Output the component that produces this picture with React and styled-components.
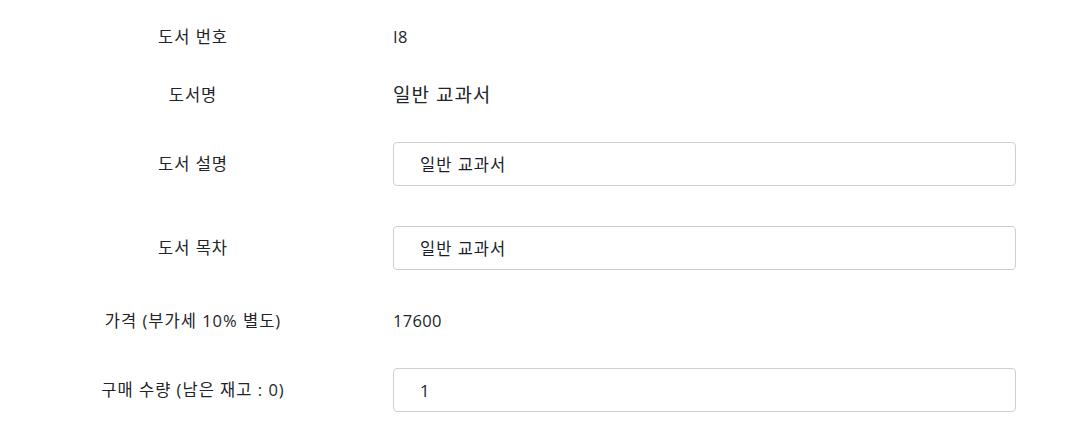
import styled, { createGlobalStyle } from "styled-components";

const GlobalStyle = createGlobalStyle`
  body {
    margin: 0;
    background: #fff;
    font-family: "Open Sans", "Noto Sans CJK KR", sans-serif;
    color: #212529;
  }
`;

const Form = styled.form`
  display: flex;
  flex-direction: column;
  padding-top: 26px;
`;

const Row = styled.div`
  display: grid;
  grid-template-columns: 386px 623px;
  column-gap: 7px;
  align-items: center;
  margin-top: ${(p) => p.$space || 0}px;
`;

const Label = styled.label`
  text-align: center;
  font-size: 16.5px;
  letter-spacing: 1px;
  line-height: 22px;
`;

const Value = styled.div`
  font-size: ${(p) => (p.$large ? 19 : 16.5)}px;
  letter-spacing: ${(p) => (p.$large ? 1 : 0.3)}px;
  line-height: ${(p) => (p.$large ? 24 : 22)}px;
`;

const Input = styled.input`
  box-sizing: border-box;
  width: 100%;
  height: 44px;
  padding: 0 26px;
  border: 1px solid #cfcfcf;
  border-radius: 4px;
  font-family: inherit;
  font-size: 16.5px;
  letter-spacing: 1px;
  color: #1a1d2e;
  background: #fff;
  outline: none;
`;

const rows = [
  { label: "도서 번호", value: "I8", space: 0 },
  { label: "도서명", value: "일반 교과서", large: true, space: 35 },
  { label: "도서 설명", input: "일반 교과서", space: 35 },
  { label: "도서 목차", input: "일반 교과서", space: 40 },
  { label: "가격 (부가세 10% 별도)", value: "17600", space: 40 },
  { label: "구매 수량 (남은 재고 : 0)", input: "1", space: 36 },
];

export default function App() {
  return (
    <>
      <GlobalStyle />
      <Form>
        {rows.map((r) => (
          <Row key={r.label} $space={r.space}>
            <Label>{r.label}</Label>
            {r.input !== undefined ? (
              <Input defaultValue={r.input} />
            ) : (
              <Value $large={r.large}>{r.value}</Value>
            )}
          </Row>
        ))}
      </Form>
    </>
  );
}
